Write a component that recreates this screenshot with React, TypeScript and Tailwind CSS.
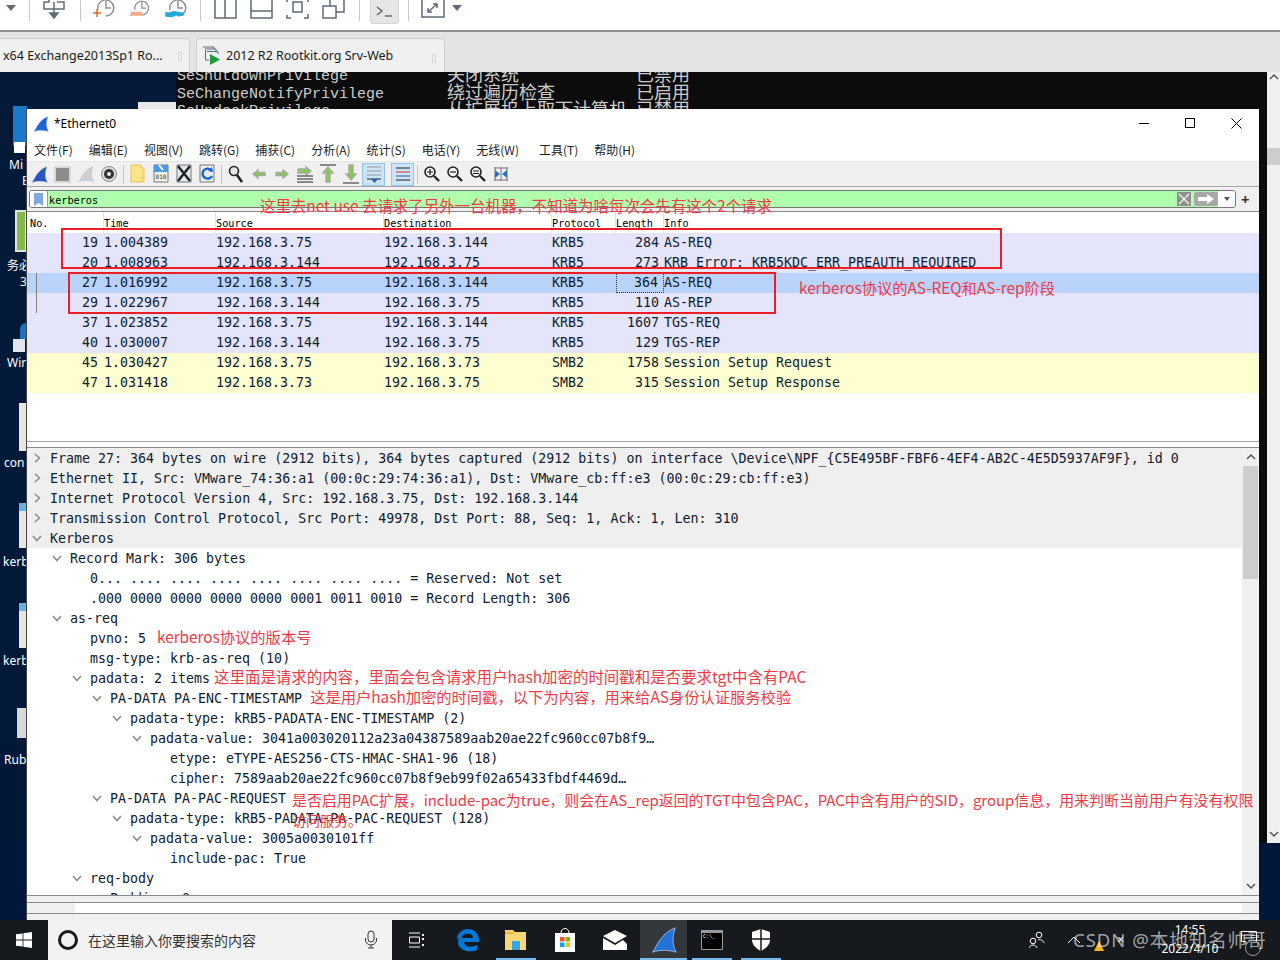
import React from "react";

const MONO = "font-['DejaVu_Sans_Mono','Noto_Sans_CJK_SC',monospace] text-[13.3px]";
const CJK = "font-['Noto_Sans_CJK_SC','Noto_Sans',sans-serif]";
const RED = "text-[#f23a46] text-[15.3px] leading-[20px] whitespace-pre font-['Noto_Sans_CJK_SC',sans-serif]";

const Fin = ({ s = 16, c = "#2a55c0" }: { s?: number; c?: string }) => (
  <svg width={s} height={s} viewBox="0 0 16 16">
    <path d="M1 15.5C4 11 6 4 15 .5C13 6 13 11 15.5 15.5C11 14 5 14 1 15.5Z" fill={c} stroke="#a9c4e8" strokeWidth=".5" />
  </svg>
);

const TopIcon = ({ w = 36, children }: { w?: number; children: React.ReactNode }) => (
  <div className="flex justify-center shrink-0" style={{ width: w }}>
    <svg width="30" height="22" viewBox="0 0 30 22" fill="none" stroke="#5d6b78" strokeWidth="1.5" className="mt-[-2px]">
      {children}
    </svg>
  </div>
);
const TopSep = () => <div className="w-px h-[21px] bg-[#c8c8c8] shrink-0" />;

const TopClock = ({ extra }: { extra: React.ReactNode }) => (
  <>
    <path d="M8 12A8 8 0 1 1 16 18" stroke="#8b949c" />
    <path d="M16 3V10H21" stroke="#8b949c" />
    {extra}
  </>
);

function TopToolbar() {
  return (
    <div className="h-8 shrink-0 bg-white border-b-2 border-[#8f8f8f] flex items-start overflow-hidden">
      <div className="w-[22px] mr-[7px] flex justify-center shrink-0 pt-[5px]">
        <div className="w-0 h-0 border-l-[5px] border-r-[5px] border-t-[6px] border-l-transparent border-r-transparent border-t-[#5d6b78]" />
      </div>
      <TopSep />
      <TopIcon w={50}>
        <path d="M9 0V4H4V11H24V4H17M14 4V11M14 11V17" />
        <path d="M10 15L14 20L18 15Z" fill="#5d6b78" />
      </TopIcon>
      <TopSep />
      <TopIcon w={47}><TopClock extra={<path d="M3 15H11M7 11V19" stroke="#e8672a" />} /></TopIcon>
      <TopIcon w={26}><TopClock extra={<path d="M3 15H16V18H3L6 15" fill="#f5a88a" stroke="#f5a88a" />} /></TopIcon>
      <TopIcon w={46}><TopClock extra={<path d="M4 15H9C11 12 14 15 21 15V17H13C10 20 8 18 4 18Z" fill="#23a8d8" stroke="#23a8d8" />} /></TopIcon>
      <TopSep />
      <div className="w-[7px] shrink-0" />
      <TopIcon w={36}><path d="M4 0H25V20H4ZM14 0V20" /></TopIcon>
      <TopIcon w={36}><path d="M4 0H25V20H4ZM4 13H25" /></TopIcon>
      <TopIcon w={36}><path d="M4 4V0M4 17V20H8M21 20H25V16M25 4V0M10 4H19V14H10Z" /></TopIcon>
      <TopIcon w={36}><path d="M4 8H17V20H4ZM11 8V1H25V14H17" /></TopIcon>
      <div className="w-[7px] shrink-0" />
      <TopSep />
      <div className="w-[48px] flex justify-center shrink-0">
        <div className="w-[29px] h-[25px] mt-[-1px] bg-[#e6e6e6] border border-[#d4d4d4] rounded-b-[3px] flex items-center justify-center">
          <svg width="20" height="16" viewBox="0 0 20 16" fill="none" stroke="#5d6b78" strokeWidth="1.5">
            <path d="M3 3L8 7L3 11M11 12H18" />
          </svg>
        </div>
      </div>
      <TopSep />
      <TopIcon w={46}><path d="M5 0H27V19H5ZM11 14L20 6M16 6H20V10M11 10V14H15" /></TopIcon>
      <div className="w-0 h-0 mt-[5px] ml-[-3px] border-l-[5px] border-r-[5px] border-t-[6px] border-l-transparent border-r-transparent border-t-[#5d6b78]" />
    </div>
  );
}

function Tabs() {
  return (
    <div className="h-10 shrink-0 bg-[#e3e4e6] flex items-end gap-[6px] font-['Noto_Sans',sans-serif] text-[12.5px] text-[#1a1a1a]">
      <div className="w-[190px] h-[34px] bg-[#f0f0f0] border border-l-0 border-b-0 border-[#cfcfcf] rounded-tr-[4px] flex items-center pl-[3px] relative">
        <span className="whitespace-pre translate-y-px">x64 Exchange2013Sp1 Ro...</span>
        <span className="absolute right-[7px] top-[13px] w-[4px] h-[9px] border border-[#d8d8d8]" />
      </div>
      <div className="w-[249px] h-[34px] bg-[#f0f0f0] border border-b-0 border-[#cfcfcf] rounded-t-[4px] flex items-center pl-[5px] gap-[5px] relative">
        <svg width="19" height="19" viewBox="0 0 19 19" fill="none">
          <path d="M1 1H12V3M3 3H14V5" stroke="#5d6b78" />
          <path d="M3.5 4V14H7M5 5.5H16V8" stroke="#5d6b78" />
          <path d="M8 8L18 13.5L8 19Z" fill="#1f9a3c" />
        </svg>
        <span className="whitespace-pre translate-y-px">2012 R2 Rootkit.org Srv-Web</span>
        <span className="absolute right-[8px] top-[15px] w-[4px] h-[9px] border border-[#d8d8d8]" />
      </div>
    </div>
  );
}

function Terminal() {
  return (
    <div className="absolute left-[176px] top-0 w-[1091px] h-[771px] bg-[#0c0c0c] overflow-hidden text-[#cccccc] font-['Liberation_Mono','Noto_Sans_CJK_SC',monospace] text-[15px] leading-[17.5px]">
      <div className="mt-[-4px] pl-px">
        {[
          ["SeShutdownPrivilege", "关闭系统", "已禁用"],
          ["SeChangeNotifyPrivilege", "绕过遍历检查", "已启用"],
          ["SeUndockPrivilege", "从扩展坞上取下计算机", "已禁用"],
        ].map(([a, b, c]) => (
          <div key={a} className="flex whitespace-pre">
            <span className="w-[270px]">{a}</span>
            <span className="w-[189px] text-[18px]">{b}</span>
            <span className="text-[18px]">{c}</span>
          </div>
        ))}
      </div>
    </div>
  );
}

function DesktopIcons() {
  const labels: [string, string, number, number][] = [
    ["Mi", "E", 85, 9],
    ["务必", "3", 186, 7],
    ["Wir", "", 283, 7],
    ["con", "", 383, 4],
    ["kerb", "", 482, 3],
    ["kerb", "", 581, 3],
    ["Rub", "", 680, 4],
  ];
  return (
    <>
      <div className="absolute left-[13px] top-[34px] w-[14px] h-[40px] bg-[#1c78c9]" />
      <div className="absolute left-[14px] top-[70px] w-[11px] h-[11px] bg-white" />
      <div className="absolute left-[15px] top-[138px] w-[12px] h-[42px] bg-[#86b84a] border-2 border-[#e4e4e4]" />
      <div className="absolute left-[20px] top-[251px] w-[6px] h-[16px] bg-[#1d6fc0] rounded-tl-[6px]" />
      <div className="absolute left-[13px] top-[267px] w-[12px] h-[13px] bg-[#dfe6ee]" />
      <div className="absolute left-[19px] top-[331px] w-[8px] h-[48px] bg-[#e7e7e0]" />
      <div className="absolute left-[19px] top-[431px] w-[8px] h-[45px] bg-[#e7e7e0] border-t-[8px] border-[#6bb0e0]" />
      <div className="absolute left-[19px] top-[531px] w-[8px] h-[45px] bg-[#e7e7e0] border-t-[8px] border-[#6bb0e0]" />
      <div className="absolute left-[17px] top-[636px] w-[10px] h-[30px] bg-[#d8d8d8]" />
      {labels.map(([a, b, t, l], i) => (
        <div key={i} className="absolute w-[60px] text-white text-[12px] leading-[16px] font-['Noto_Sans','Noto_Sans_CJK_SC',sans-serif]" style={{ top: t, left: l }}>
          <div>{a}</div>
          {b && <div className="pl-[13px]">{b}</div>}
        </div>
      ))}
    </>
  );
}

const Ic = ({ w = 20, children }: { w?: number; children: React.ReactNode }) => (
  <svg width={w} height="20" viewBox="0 0 20 20" fill="none" className="shrink-0">{children}</svg>
);
const Mag = ({ sign }: { sign: string }) => (
  <>
    <circle cx="8" cy="8" r="5" fill="#f2f2f2" stroke="#222" strokeWidth="1.6" />
    <path d="M12 12L17 17" stroke="#222" strokeWidth="2.4" />
    <path d={sign} stroke="#222" strokeWidth="1.2" />
  </>
);
const Arrow = ({ d }: { d: string }) => <path d={d} fill="#7fcf4a" stroke="#a8a8a8" strokeWidth="1.4" />;

function WsToolbar() {
  const Sep = () => <div className="w-px h-[19px] bg-[#c8c8c8] ml-[3px] mr-[2px] shrink-0" />;
  const cell = "w-[23px] flex justify-center shrink-0";
  const Box = ({ on, children }: { on?: boolean; children: React.ReactNode }) => (
    <div className={cell + (on ? " h-[23px] items-center bg-[#cde4f7] border border-[#8fc4ee]" : "")}>{children}</div>
  );
  return (
    <div className="h-[26px] bg-[#f0f0f0] border-t border-[#e5e5e5] border-b border-b-[#a8a8a8] flex items-center pl-[1px] shrink-0">
      <Box><Fin s={17} /></Box>
      <Box><div className="w-[17px] h-[17px] border-2 border-[#d8d8d8] bg-[#8c8c8c]" /></Box>
      <Box><Fin s={16} c="#cfcfcf" /></Box>
      <Box><Ic><circle cx="10" cy="10" r="7.5" fill="#ddd" stroke="#8a8a8a" /><circle cx="10" cy="10" r="5" fill="#333" /><circle cx="10" cy="10" r="2" fill="#eee" /></Ic></Box>
      <Sep />
      <Box><Ic><path d="M3 1H13V4H16V18H3Z" fill="#fde38a" stroke="#edc34e" /><path d="M13 14H16" stroke="#edc34e" /></Ic></Box>
      <Box><Ic><path d="M3 1H17V18H3Z" fill="#f1f1e8" stroke="#777" /><path d="M3 1H17V8H3Z" fill="#4a9be0" /><path d="M8 1L12 6" stroke="#fff" strokeWidth="2" /><text x="10" y="15" textAnchor="middle" fontSize="6" fill="#333" fontFamily="DejaVu Sans Mono">010</text></Ic></Box>
      <Box><Ic><path d="M3 1H17V18H3Z" fill="#dfe8ef" stroke="#777" /><path d="M4 2L16 17M16 2L4 17" stroke="#222" strokeWidth="2.5" /></Ic></Box>
      <Box><Ic><path d="M3 1H17V18H3Z" fill="#e3eef8" stroke="#777" /><path d="M14 6A5 5 0 1 0 15 12" stroke="#1c62c4" strokeWidth="2.4" /><path d="M11 7L16 8L15 3Z" fill="#1c62c4" /></Ic></Box>
      <Sep />
      <Box><Ic><circle cx="8" cy="7" r="4.5" fill="#e8e8e8" stroke="#222" strokeWidth="1.6" /><path d="M11 11L16 18" stroke="#222" strokeWidth="2.6" /></Ic></Box>
      <Box><Ic><Arrow d="M4 10L9 6V8.5H16V11.5H9V14Z" /></Ic></Box>
      <Box><Ic><Arrow d="M16 10L11 6V8.5H4V11.5H11V14Z" /></Ic></Box>
      <Box><Ic><Arrow d="M16 7L11 3V5H3V9H11V11Z" /><path d="M2 12H18M2 15H18M2 18H18" stroke="#222" /></Ic></Box>
      <Box><Ic><path d="M2 1H18" stroke="#222" /><Arrow d="M10 3L15 9H12V18H8V9H5Z" /></Ic></Box>
      <Box><Ic><path d="M2 19H18" stroke="#222" /><Arrow d="M10 16L15 10H12V1H8V10H5Z" /></Ic></Box>
      <Box on><Ic><path d="M3 3H17M3 7H17M3 11H17" stroke="#999" /><path d="M3 15H17" stroke="#222" /><path d="M7 15H14L10.5 19Z" fill="#2a5fb0" /></Ic></Box>
      <div className="w-[6px] shrink-0" />
      <Box on><Ic><path d="M3 4H17" stroke="#222" /><path d="M3 8H17" stroke="#e03030" /><path d="M3 12H17" stroke="#2a4fb0" /><path d="M3 16H17" stroke="#222" /></Ic></Box>
      <Sep />
      <Box><Ic><Mag sign="M5 8H11M8 5V11" /></Ic></Box>
      <Box><Ic><Mag sign="M5 8H11" /></Ic></Box>
      <Box><Ic><Mag sign="M5 7H11M5 9.5H11" /></Ic></Box>
      <Box><Ic><path d="M4 3V17M10 3V17M16 3V17M3 4H17M3 16H17" stroke="#777" /><path d="M4 6L9 10L4 14ZM16 6L11 10L16 14Z" fill="#2a6fc0" /></Ic></Box>
    </div>
  );
}

function FilterBar() {
  return (
    <div className="h-[25px] bg-[#f0f0f0] border-b border-[#8a8a8a] flex items-center pl-[2px] shrink-0 relative">
      <div className="w-[1207px] h-[18px] bg-[#afffaf] border border-[#777] rounded-[3px] flex items-center overflow-hidden">
        <div className="w-[18px] h-full bg-white border-r border-[#999] flex justify-center items-center shrink-0">
          <svg width="9" height="13" viewBox="0 0 9 13"><path d="M0 0H9V13L4.5 10L0 13Z" fill="#7fa8dc" /></svg>
        </div>
        <span className="pl-[1px] font-['DejaVu_Sans_Mono',monospace] text-[10.2px] text-black flex-1 translate-y-[2px]">kerberos</span>
        <div className="w-[14px] h-[14px] bg-[#8f8f8f] text-white flex items-center justify-center shrink-0">
          <svg width="12" height="12" viewBox="0 0 12 12"><path d="M1 1L11 11M11 1L1 11" stroke="#fff" strokeWidth="1.2" /></svg>
        </div>
        <div className="w-[24px] h-[14px] ml-[3px] bg-[#a8a8a8] rounded-[2px] flex items-center justify-center shrink-0">
          <svg width="18" height="10" viewBox="0 0 18 10"><path d="M1 3H10V0L17 5L10 10V7H1Z" fill="#fff" /></svg>
        </div>
        <div className="w-[17px] bg-white h-full flex items-center justify-center shrink-0">
          <div className="w-0 h-0 border-l-[3px] border-r-[3px] border-t-[4px] border-l-transparent border-r-transparent border-t-[#555]" />
        </div>
      </div>
      <span className="ml-[5px] text-[15px] font-bold leading-none text-[#333]">+</span>
    </div>
  );
}

const cols = "grid grid-cols-[77px_112px_168px_168px_64px_48px_1fr]";

function PacketList() {
  const rows: [string, string, string, string, string, string, string, string][] = [
    ["19", "1.004389", "192.168.3.75", "192.168.3.144", "KRB5", "284", "AS-REQ", "bg-[#e4e4fb]"],
    ["20", "1.008963", "192.168.3.144", "192.168.3.75", "KRB5", "273", "KRB Error: KRB5KDC_ERR_PREAUTH_REQUIRED", "bg-[#e4e4fb]"],
    ["27", "1.016992", "192.168.3.75", "192.168.3.144", "KRB5", "364", "AS-REQ", "bg-[#b9d3fa]"],
    ["29", "1.022967", "192.168.3.144", "192.168.3.75", "KRB5", "110", "AS-REP", "bg-[#e4e4fb]"],
    ["37", "1.023852", "192.168.3.75", "192.168.3.144", "KRB5", "1607", "TGS-REQ", "bg-[#e4e4fb]"],
    ["40", "1.030007", "192.168.3.144", "192.168.3.75", "KRB5", "129", "TGS-REP", "bg-[#e4e4fb]"],
    ["45", "1.030427", "192.168.3.75", "192.168.3.73", "SMB2", "1758", "Session Setup Request", "bg-[#fefed0]"],
    ["47", "1.031418", "192.168.3.73", "192.168.3.75", "SMB2", "315", "Session Setup Response", "bg-[#fefed0]"],
  ];
  const heads = ["No.", "Time", "Source", "Destination", "Protocol", "Length", "Info"];
  return (
    <div className="h-[230px] bg-white border-b border-[#a0a0a0] shrink-0 relative overflow-hidden">
      <div className={cols + " h-[21px] font-['DejaVu_Sans_Mono',monospace] text-[10.2px] text-black"}>
        {heads.map((h, i) => (
          <div key={h} className={"pt-[4px] border-r border-[#e3e3e3] overflow-hidden whitespace-pre " + (i === 0 ? "pl-[3px] " : "") + (i === 6 ? "border-r-0" : "")}>{h}</div>
        ))}
      </div>
      {rows.map((r) => (
        <div key={r[0]} className={cols + " h-5 leading-[20px] text-[#10202e] " + MONO + " " + r[7]}>
          <div className="text-right pr-[6px]">{r[0]}</div>
          <div>{r[1]}</div>
          <div>{r[2]}</div>
          <div>{r[3]}</div>
          <div>{r[4]}</div>
          <div className={"text-right pr-[5px] " + (r[0] === "27" ? "border border-dotted border-[#333] leading-[18px] pr-[4px]" : "")}>{r[5]}</div>
          <div className="whitespace-pre">{r[6]}</div>
        </div>
      ))}
      <div className="absolute left-[9px] top-[61px] w-px h-[40px] bg-[#808080]" />
    </div>
  );
}

type Row = { l: number; a?: "r" | "d"; t: string; n?: string; m?: number; big?: boolean };
const tree: Row[] = [
  { l: 0, a: "r", t: "Frame 27: 364 bytes on wire (2912 bits), 364 bytes captured (2912 bits) on interface \\Device\\NPF_{C5E495BF-FBF6-4EF4-AB2C-4E5D5937AF9F}, id 0" },
  { l: 0, a: "r", t: "Ethernet II, Src: VMware_74:36:a1 (00:0c:29:74:36:a1), Dst: VMware_cb:ff:e3 (00:0c:29:cb:ff:e3)" },
  { l: 0, a: "r", t: "Internet Protocol Version 4, Src: 192.168.3.75, Dst: 192.168.3.144" },
  { l: 0, a: "r", t: "Transmission Control Protocol, Src Port: 49978, Dst Port: 88, Seq: 1, Ack: 1, Len: 310" },
  { l: 0, a: "d", t: "Kerberos" },
  { l: 1, a: "d", t: "Record Mark: 306 bytes" },
  { l: 2, t: "0... .... .... .... .... .... .... .... = Reserved: Not set" },
  { l: 2, t: ".000 0000 0000 0000 0000 0001 0011 0010 = Record Length: 306" },
  { l: 1, a: "d", t: "as-req" },
  { l: 2, t: "pvno: 5", n: "kerberos协议的版本号", m: 11 },
  { l: 2, t: "msg-type: krb-as-req (10)" },
  { l: 2, a: "d", t: "padata: 2 items", n: "这里面是请求的内容，里面会包含请求用户hash加密的时间戳和是否要求tgt中含有PAC", m: 4, big: true },
  { l: 3, a: "d", t: "PA-DATA PA-ENC-TIMESTAMP", n: "这是用户hash加密的时间戳，以下为内容，用来给AS身份认证服务校验", m: 8 },
  { l: 4, a: "d", t: "padata-type: kRB5-PADATA-ENC-TIMESTAMP (2)" },
  { l: 5, a: "d", t: "padata-value: 3041a003020112a23a04387589aab20ae22fc960cc07b8f9…" },
  { l: 6, t: "etype: eTYPE-AES256-CTS-HMAC-SHA1-96 (18)" },
  { l: 6, t: "cipher: 7589aab20ae22fc960cc07b8f9eb99f02a65433fbdf4469d…" },
  { l: 3, a: "d", t: "PA-DATA PA-PAC-REQUEST" },
  { l: 4, a: "d", t: "padata-type: kRB5-PADATA-PA-PAC-REQUEST (128)" },
  { l: 5, a: "d", t: "padata-value: 3005a0030101ff" },
  { l: 6, t: "include-pac: True" },
  { l: 2, a: "d", t: "req-body" },
  { l: 3, t: "Padding: 0" },
];

const Chevron = ({ d }: { d: "r" | "d" }) => (
  <svg width="10" height="10" viewBox="0 0 10 10" fill="none" stroke="#8a8a8a" strokeWidth="1.5" className="shrink-0 block">
    <path d={d === "r" ? "M3 1L7.5 5L3 9" : "M1 3L5 7.5L9 3"} />
  </svg>
);

function Details() {
  return (
    <div className="flex-1 min-h-0 flex border-t border-b border-[#8a8a8a] bg-white overflow-hidden mt-[5px]">
      <div className="flex-1 min-w-0 overflow-hidden">
        {tree.map((r, i) => (
          <div
            key={i}
            className={"h-5 flex items-center leading-[20px] text-[#10202e] whitespace-pre relative " + MONO + " " + (i < 5 ? "bg-[#efefef]" : "")}
            style={{ paddingLeft: 23 + r.l * 20 }}
          >
            {r.a ? (
              <span className="absolute top-[5px]" style={{ left: 5 + r.l * 20 }}><Chevron d={r.a} /></span>
            ) : null}
            <span className="translate-y-px">{r.t}</span>
            {r.n ? <span className={RED + " -translate-y-[2px] " + (r.big ? "!text-[15.45px]" : "")} style={{ marginLeft: r.m }}>{r.n}</span> : null}
          </div>
        ))}
      </div>
      <div className="w-[17px] bg-[#f0f0f0] shrink-0 flex flex-col items-center">
        <svg width="10" height="18" viewBox="0 0 10 18" fill="none" stroke="#555" strokeWidth="1.5"><path d="M1 11L5 7L9 11" /></svg>
        <div className="w-[15px] h-[113px] bg-[#cdcdcd]" />
        <div className="flex-1" />
        <svg width="10" height="18" viewBox="0 0 10 18" fill="none" stroke="#555" strokeWidth="1.5"><path d="M1 7L5 11L9 7" /></svg>
      </div>
    </div>
  );
}

function WsWindow() {
  return (
    <div className="absolute left-[26px] top-[37px] w-[1233px] bottom-0 bg-white border-l border-[#444] flex flex-col z-10">
      <div className="h-[30px] flex items-center pl-[6px] shrink-0 bg-white">
        <Fin s={16} c="#1f66d0" />
        <span className="ml-[5px] text-[12px] text-black font-['Noto_Sans',sans-serif]">*Ethernet0</span>
        <div className="flex-1" />
        <div className="w-[46px] flex justify-center -translate-y-px"><div className="w-[10px] h-px bg-black" /></div>
        <div className="w-[46px] flex justify-center -translate-y-px"><div className="w-[10px] h-[10px] border border-black" /></div>
        <div className="w-[46px] flex justify-center -translate-y-px">
          <svg width="11" height="11" viewBox="0 0 11 11" stroke="#000"><path d="M.5.5L10.5 10.5M10.5.5L.5 10.5" /></svg>
        </div>
      </div>
      <div className={"h-[22px] flex items-center pl-[7px] gap-[16px] shrink-0 text-[12px] text-[#222] bg-white " + CJK}>
        {["文件(F)", "编辑(E)", "视图(V)", "跳转(G)", "捕获(C)", "分析(A)", "统计(S)", "电话(Y)", "无线(W)", "工具(T)", "帮助(H)"].map((m, i) => (
          <span key={m} className={i === 9 ? "ml-[4px]" : ""}>{m}</span>
        ))}
      </div>
      <WsToolbar />
      <FilterBar />
      <PacketList />
      <Details />
      <div className="h-[6px] bg-[#f0f0f0] shrink-0" />
      <div className="h-[12px] border-t border-b border-[#8a8a8a] bg-white flex shrink-0">
        <div className="w-[48px] bg-[#f0f0f0]" />
        <div className="flex-1" />
        <div className="w-[17px] bg-[#f0f0f0]" />
      </div>
      <div className="h-[6px] bg-[#f0f0f0] shrink-0" />
    </div>
  );
}

function Overlays() {
  return (
    <div className="contents">
      <div className={"absolute left-[260px] top-[123px] z-20 !text-[15.45px] " + RED}>这里去net use 去请求了另外一台机器，不知道为啥每次会先有这个2个请求</div>
      <div className="absolute left-[61px] top-[156px] w-[941px] h-[41px] border-2 border-[#ee1c25] z-20" />
      <div className="absolute left-[68px] top-[200px] w-[708px] h-[42px] border-2 border-[#ee1c25] z-20" />
      <div className={"absolute left-[799px] top-[205px] z-20 " + RED}>kerberos协议的AS-REQ和AS-rep阶段</div>
      <div className={"absolute left-[292px] top-[718px] z-20 !text-[14.95px] " + RED}>是否启用PAC扩展，include-pac为true，则会在AS_rep返回的TGT中包含PAC，PAC中含有用户的SID，group信息，用来判断当前用户有没有权限</div>
      <div className={"absolute left-[292px] top-[738px] z-20 !text-[14px] " + RED}>访问服务。</div>
    </div>
  );
}

function RightScroll() {
  return (
    <div className="absolute left-[1267px] top-0 w-[13px] h-[771px] bg-[#f0f0f0] flex flex-col items-center justify-between">
      <svg width="10" height="8" viewBox="0 0 10 8" fill="none" stroke="#555" strokeWidth="1.5" className="mt-[1px]"><path d="M1 6L5 2L9 6" /></svg>
      <svg width="10" height="8" viewBox="0 0 10 8" fill="none" stroke="#555" strokeWidth="1.5" className="mb-[5px]"><path d="M1 2L5 6L9 2" /></svg>
    </div>
  );
}

function Taskbar() {
  const Btn = ({ w, on, bar, children }: { w: number; on?: boolean; bar?: boolean; children: React.ReactNode }) => (
    <div className={"h-full flex items-center justify-center relative shrink-0 " + (on ? "bg-[#33373b]" : "")} style={{ width: w }}>
      {children}
      {bar ? <div className="absolute left-0 right-0 bottom-0 h-[2px] bg-[#76b9ed]" /> : null}
    </div>
  );
  return (
    <div className="h-10 shrink-0 bg-[#16191d] flex items-center relative z-30">
      <div className="w-[48px] h-full flex items-center justify-center shrink-0">
        <svg width="16" height="16" viewBox="0 0 16 16" fill="#fff">
          <path d="M0 2.3L6.6 1.4V7.6H0ZM7.4 1.3L16 0V7.6H7.4ZM0 8.4H6.6V14.6L0 13.7ZM7.4 8.4H16V16L7.4 14.7Z" />
        </svg>
      </div>
      <div className={"w-[344px] h-full bg-[#f2f2f2] flex items-center pl-[10px] shrink-0 " + CJK}>
        <div className="w-[20px] h-[20px] rounded-full border-[3px] border-[#1a1a1a] shrink-0" />
        <span className="ml-[10px] text-[14px] text-[#333] flex-1">在这里输入你要搜索的内容</span>
        <svg width="14" height="20" viewBox="0 0 14 20" fill="none" stroke="#333" className="mr-[14px]">
          <rect x="4" y="1" width="6" height="11" rx="3" />
          <path d="M1.5 8V10A5.5 5 0 0 0 12.5 10V8M7 15V18M4 18H10" />
        </svg>
      </div>
      <Btn w={48}>
        <svg width="16" height="16" viewBox="0 0 16 16" fill="none" stroke="#fff"><path d="M1 1H12M1 15H12M1.5 5H11.5V11H1.5Z" /><path d="M14 6H16V8H14ZM14 2H16V4H14ZM14 12H16V14H14Z" fill="#fff" stroke="none" /></svg>
      </Btn>
      <Btn w={56}>
        <svg width="24" height="24" viewBox="0 0 24 24"><path d="M1 12C1 5 6 1 12 1C19 1 23 6 23 13V14H8C8 19 16 20 21 17V22C14 25 2 23 2 14C2 11 4 8 7 6C6 8 6 9 6 10H17C17 5 8 3 1 12Z" fill="#0078d7" /></svg>
      </Btn>
      <Btn w={40} bar>
        <svg width="24" height="22" viewBox="0 0 24 22"><path d="M1 1H9L11 3H22V21H1Z" fill="#f8d775" /><path d="M8 21V12H16V21Z" fill="#3aa3e3" /><path d="M1 3H10V5H1Z" fill="#e5b942" /></svg>
      </Btn>
      <div className="w-[4px] shrink-0" />
      <Btn w={50}>
        <svg width="22" height="26" viewBox="0 0 22 26" fill="none"><path d="M7 6C7 0 15 0 15 6" stroke="#fff" /><path d="M1 6H21V25H1Z" fill="#fff" /><path d="M6 10H10.5V14.5H6Z" fill="#f25022" /><path d="M11.5 10H16V14.5H11.5Z" fill="#7fba00" /><path d="M6 15.5H10.5V20H6Z" fill="#00a4ef" /><path d="M11.5 15.5H16V20H11.5Z" fill="#ffb900" /></svg>
      </Btn>
      <Btn w={50}>
        <svg width="24" height="20" viewBox="0 0 24 20"><path d="M0 6L12 0L24 6L12 13Z" fill="#fff" /><path d="M0 8L12 15L20 10L24 14V20H0Z" fill="#fff" /></svg>
      </Btn>
      <Btn w={47} on bar>
        <Fin s={26} c="#2272d8" />
      </Btn>
      <div className="w-[5px] shrink-0" />
      <Btn w={40} bar>
        <div className="w-[22px] h-[20px] bg-black border border-[#999] border-t-[3px] text-white text-[5px] leading-[8px] pl-[1px] font-['Liberation_Mono',monospace]">C:\_</div>
      </Btn>
      <div className="w-[9px] shrink-0" />
      <Btn w={40} bar>
        <svg width="18" height="22" viewBox="0 0 18 22"><path d="M9 0L18 3V11C18 16 13 20 9 22C5 20 0 16 0 11V3Z" fill="#fff" /><path d="M9 0V22M0 10H18" stroke="#16191d" strokeWidth="1.5" /></svg>
      </Btn>
      <div className="flex-1" />
      <div className="w-[245px] h-full shrink-0 relative text-white font-['Noto_Sans','Noto_Sans_CJK_SC',sans-serif]">
        <svg width="16" height="18" viewBox="0 0 16 18" fill="none" stroke="#fff" className="absolute left-[-6px] top-[11px]"><circle cx="10" cy="4" r="2.8" /><circle cx="4" cy="10" r="2.8" /><path d="M0 17C1 13 7 13 8 17M9 9C11 8 14 9 15 12" /></svg>
        <svg width="14" height="8" viewBox="0 0 14 8" fill="none" stroke="#fff" className="absolute left-[32px] top-[16px]"><path d="M1 7L7 1L13 7" /></svg>
        <svg width="10" height="10" viewBox="0 0 10 10" className="absolute left-[59px] top-[21px]"><path d="M5 0L10 10H0Z" fill="#f5b800" /></svg>
        <span className="absolute left-[82px] top-[12px] text-[12px] leading-[16px]">×</span>
        <span className="absolute left-[125px] top-0 text-[12px] leading-[20px] w-[60px] text-center">14:55</span>
        <span className="absolute left-[125px] top-[19px] text-[12px] leading-[20px] w-[60px] text-center">2022/4/10</span>
        <svg width="16" height="14" viewBox="0 0 16 14" fill="none" stroke="#fff" className="absolute left-[206px] top-[11px]"><path d="M.5.5H15.5V10.5H8L5 13.5V10.5H.5ZM3 4H13M3 7H13" /></svg>
        <div className="absolute left-[210px] top-[20px] w-[16px] h-[16px] rounded-full bg-[#16191d] border border-[#999]" />
        <span className="absolute left-[38px] top-[7px] text-[18.5px] leading-[26px] tracking-[1px] text-white/60 whitespace-pre">CSDN @本地知名帅哥</span>
      </div>
    </div>
  );
}

export default function App() {
  return (
    <div className="w-[1280px] h-[960px] overflow-hidden flex flex-col bg-white">
      <TopToolbar />
      <Tabs />
      <div className="flex-1 relative bg-gradient-to-b from-[#041a38] to-[#02183a] overflow-hidden">
        <DesktopIcons />
        <Terminal />
        <div className="absolute left-[138px] top-[30px] w-[38px] h-[8px] bg-[#e8e8e8]" />
        <RightScroll />
        <div className="absolute left-[1267px] top-[76px] w-[13px] h-[17px] bg-[#cdcdcd]" />
        <WsWindow />
        <Overlays />
      </div>
      <Taskbar />
    </div>
  );
}
